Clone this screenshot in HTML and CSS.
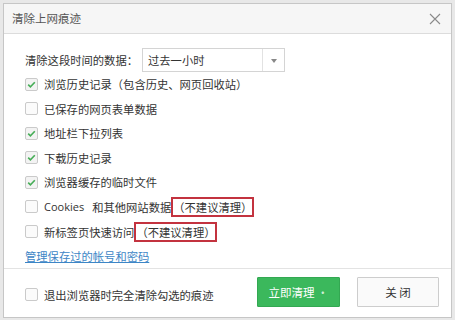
FILE: index.html
```html
<!DOCTYPE html>
<html lang="zh-CN">
<head>
  <meta charset="UTF-8" />
  <title>清除上网痕迹</title>
  <link rel="stylesheet" href="styles.css">
</head>
<body>
  <div class="dialog">
    <div class="titlebar">
      <span class="title">清除上网痕迹</span>
      <svg class="close-x" width="12" height="12" viewBox="0 0 12 12">
        <path d="M1 1 L11 11 M11 1 L1 11" stroke="#8a8a8a" stroke-width="1.1" fill="none"/>
      </svg>
    </div>

    <div class="content">
      <div class="range-row">
        <span>清除这段时间的数据：</span>
        <div class="select">
          <span class="select-text">过去一小时</span>
          <span class="select-arrow"></span>
        </div>
      </div>

      <div class="row"><span class="box checked"></span>浏览历史记录（包含历史、网页回收站）</div>
      <div class="row"><span class="box"></span>已保存的网页表单数据</div>
      <div class="row"><span class="box checked"></span>地址栏下拉列表</div>
      <div class="row"><span class="box checked"></span>下载历史记录</div>
      <div class="row"><span class="box checked"></span>浏览器缓存的临时文件</div>
      <div class="row"><span class="box"></span><span class="latin">Cookies</span>和其他网站数据<span class="warn">（不建议清理）</span></div>
      <div class="row"><span class="box"></span>新标签页快速访问<span class="warn">（不建议清理）</span></div>
      <div class="row"><a class="link" href="#">管理保存过的帐号和密码</a></div>
    </div>

    <div class="footer">
      <div class="row exit"><span class="box"></span>退出浏览器时完全清除勾选的痕迹</div>
      <button class="btn btn-green">立即清理 <span class="dot">·</span></button>
      <button class="btn btn-plain">关 闭</button>
    </div>
  </div>
</body>
</html>
```

FILE: styles.css
```css
body {
  margin: 0;
  padding: 3px 3px 2px 3px;
  background: #e8e8e8;
  font-family: "Noto Sans CJK SC", "Liberation Sans", sans-serif;
  font-size: 11.3px;
  color: #333;
}

.dialog {
  width: 447px;
  height: 313px;
  border: 1px solid #c6c6c6;
  background: #fff;
  display: flex;
  flex-direction: column;
}

.titlebar {
  height: 29px;
  background: #f6f6f6;
  border-bottom: 1px solid #dcdcdc;
  display: flex;
  align-items: center;
  justify-content: space-between;
  padding: 0 10px 0 8px;
}

.title {
  font-size: 11.5px;
  color: #555;
}

.close-x {
  margin-top: 2px;
}

.content {
  padding: 14px 0 0 21px;
}

.range-row {
  display: flex;
  align-items: center;
  height: 24px;
}

.select {
  margin-left: 4px;
  width: 141px;
  height: 22px;
  border: 1px solid #d4d4d4;
  display: flex;
  align-items: center;
}

.select-text {
  flex: 1;
  padding-left: 5px;
}

.select-arrow {
  width: 21px;
  height: 22px;
  border-left: 1px solid #e2e2e2;
  position: relative;
}

.select-arrow::after {
  content: "";
  position: absolute;
  left: 8px;
  top: 10px;
  border-left: 3px solid transparent;
  border-right: 3px solid transparent;
  border-top: 4px solid #888;
}

.row {
  height: 24.6px;
  display: flex;
  align-items: center;
  white-space: nowrap;
}

.latin {
  font-family: "Open Sans", sans-serif;
  font-size: 11px;
  margin-right: 8px;
}

.box {
  width: 11px;
  height: 11px;
  border: 1px solid #cacaca;
  border-radius: 2px;
  background: #fbfbfb;
  margin-right: 6px;
  flex: none;
}

.box.checked {
  background: #f3f3f3 url("data:image/svg+xml;utf8,<svg xmlns='http://www.w3.org/2000/svg' width='11' height='11' viewBox='0 0 11 11'><path d='M2.2 5.6 L4.4 7.8 L8.8 3.2' stroke='%2346ad57' stroke-width='1.6' fill='none'/></svg>") no-repeat center;
}

.warn {
  border: 2px solid #c3333f;
  padding: 0;
  line-height: 16px;
}

.link {
  color: #3d86c6;
  text-decoration: underline;
}

.footer {
  margin-top: auto;
  height: 48px;
  border-top: 1px solid #e3e3e3;
  display: flex;
  align-items: center;
  padding: 0 12px 0 21px;
}

.footer .exit {
  flex: 1;
  margin-top: 3px;
}

.btn {
  height: 30px;
  font-family: inherit;
  font-size: 11.5px;
  border-radius: 1px;
  margin-top: -2px;
}

.btn-green {
  width: 83px;
  background: #3bb85c;
  border: 1px solid #33a852;
  color: #fff;
}

.dot {
  color: #cfeed6;
}

.btn-plain {
  width: 82px;
  margin-left: 17px;
  background: #fafafa;
  border: 1px solid #cdcdcd;
  color: #333;
}
```
